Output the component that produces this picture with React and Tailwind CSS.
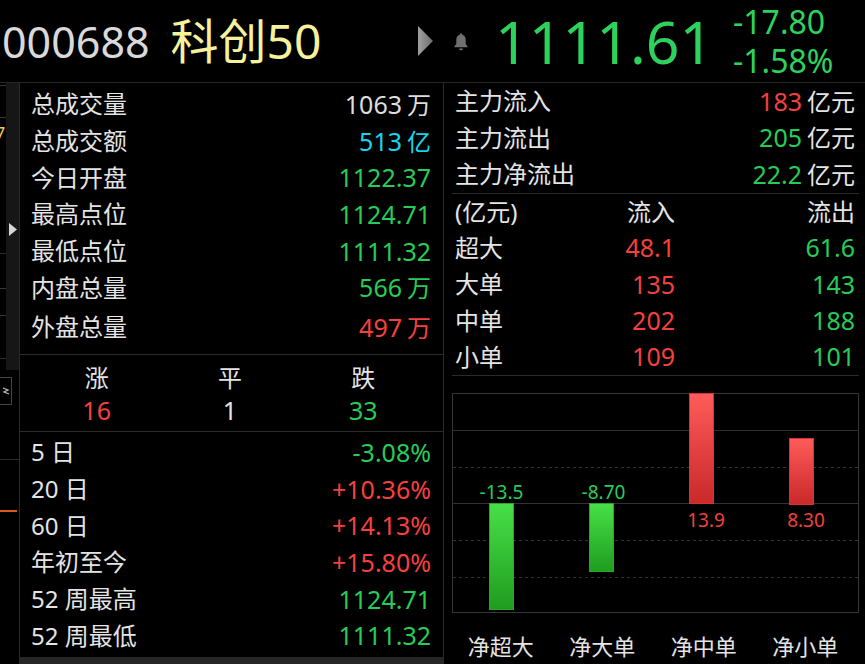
import React from 'react';

// colours taken from the quote panel
const RED = 'text-[#f5403f]';
const GREEN = 'text-[#27cc57]';

const summaryRows = [
  { label: '总成交量', value: '1063', unit: '万', color: 'text-[#dedede]' },
  { label: '总成交额', value: '513', unit: '亿', color: 'text-[#1cd3ec]' },
  { label: '今日开盘', value: '1122.37', color: GREEN },
  { label: '最高点位', value: '1124.71', color: GREEN },
  { label: '最低点位', value: '1111.32', color: GREEN },
  { label: '内盘总量', value: '566', unit: '万', color: GREEN },
];

const periodRows = [
  { label: '5 日', value: '-3.08%', color: GREEN },
  { label: '20 日', value: '+10.36%', color: RED },
  { label: '60 日', value: '+14.13%', color: RED },
  { label: '年初至今', value: '+15.80%', color: RED },
  { label: '52 周最高', value: '1124.71', color: GREEN },
  { label: '52 周最低', value: '1111.32', color: GREEN },
];

const flowRows = [
  { label: '主力流入', value: '183', color: RED },
  { label: '主力流出', value: '205', color: GREEN },
  { label: '主力净流出', value: '22.2', color: GREEN },
];

const orderRows = [
  { label: '超大', inflow: '48.1', outflow: '61.6' },
  { label: '大单', inflow: '135', outflow: '143' },
  { label: '中单', inflow: '202', outflow: '188' },
  { label: '小单', inflow: '109', outflow: '101' },
];

function SideStrip() {
  return (
    <div className="flex w-[20px] flex-col border-r border-[#2a2a2a]">
      <div className="flex h-[287px]">
        <div className="flex w-[6px] flex-col">
          <div className="h-[2px]" />
          <div className="h-[33px] border-y border-[#383838]" />
          <div className="flex h-[30px] items-center overflow-hidden">
            <span className="-ml-[5px] text-[18px] leading-none text-[#e9c94c]">7</span>
          </div>
          <div className="h-[105px]" />
          <div className="h-[35px] border-t border-[#2e2e2e]" />
          <div className="h-[28px] border-y border-[#383838]" />
          <div className="h-[42px]" />
          <div className="border-t border-[#2e2e2e]" />
        </div>
        <div className="flex w-[13px] flex-col items-center bg-[#161616]">
          <svg width="10" height="13" viewBox="0 0 10 13" className="mt-[140px]">
            <polygon points="1,0 9,6.5 1,13" fill="#d6d6d6" />
          </svg>
        </div>
      </div>
      <div className="h-[7px]" />
      <div className="flex h-[28px] w-[12px] items-center justify-center border-y border-r border-[#444]">
        <svg width="8" height="10" viewBox="0 0 8 10">
          <polyline points="1,2 6,4 2,6 7,8" fill="none" stroke="#bdbdbd" strokeWidth="1.3" />
        </svg>
      </div>
      <div className="h-[54px]" />
      <div className="h-[51px] border-t border-[#2a2a2a]" />
      <div className="h-[2px] w-[17px] bg-[#d8561f]" />
    </div>
  );
}

function Unit({ children }) {
  return <span className="ml-[5px] text-[24px]">{children}</span>;
}

function LeftPanel() {
  return (
    <div className="flex w-[424px] flex-col border-r border-[#2a2a2a]">
      {/* summary */}
      <div className="flex h-[272px] flex-col border-b border-[#2a2a2a] pt-[3px] pl-[11px] pr-[12px]">
        {summaryRows.map((r) => (
          <div key={r.label} className="flex h-[36.7px] items-center justify-between">
            <span className="text-[#e4e4e4]">{r.label}</span>
            <span className={`text-[25px] ${r.color}`}>
              {r.value}
              {r.unit && <Unit>{r.unit}</Unit>}
            </span>
          </div>
        ))}
        <div className="flex h-[42px] items-center justify-between">
          <span className="text-[#e4e4e4]">外盘总量</span>
          <span className={`text-[25px] ${RED}`}>
            497<Unit>万</Unit>
          </span>
        </div>
      </div>

      {/* advance / flat / decline */}
      <div className="h-[77px] border-b border-[#2a2a2a]">
        <div className="ml-[10px] mt-[9px] grid h-[28px] w-[400px] grid-cols-3 items-center text-center text-[#e4e4e4]">
          <span>涨</span>
          <span>平</span>
          <span>跌</span>
        </div>
        <div className="ml-[10px] grid h-[36px] w-[400px] grid-cols-3 items-center text-center text-[25px]">
          <span className={RED}>16</span>
          <span className="text-[#e4e4e4]">1</span>
          <span className={GREEN}>33</span>
        </div>
      </div>

      {/* period changes */}
      <div className="flex flex-1 flex-col pt-[2px] pl-[11px] pr-[12px]">
        {periodRows.map((r) => (
          <div key={r.label} className="flex h-[36.7px] items-center justify-between">
            <span className="text-[#e4e4e4]">{r.label}</span>
            <span className={`text-[25px] ${r.color}`}>{r.value}</span>
          </div>
        ))}
      </div>
      <div className="h-[7px] bg-[#262626]" />
    </div>
  );
}

function FlowChart() {
  const bars = [
    { x: 37, y: 110, h: 106, up: false, label: '-13.5', lx: 49.5, ly: 106 },
    { x: 137, y: 110, h: 68, up: false, label: '-8.70', lx: 151.5, ly: 106 },
    { x: 237, y: 0, h: 110, up: true, label: '13.9', lx: 254, ly: 134 },
    { x: 337, y: 45, h: 66, up: true, label: '8.30', lx: 354, ly: 134 },
  ];
  return (
    <svg width="408" height="221" viewBox="0 0 408 221" className="ml-[8px] mt-[17px] block">
      <defs>
        <linearGradient id="gUp" x1="0" y1="0" x2="0" y2="1">
          <stop offset="0" stopColor="#ff5b5b" />
          <stop offset="1" stopColor="#c92929" />
        </linearGradient>
        <linearGradient id="gDown" x1="0" y1="0" x2="0" y2="1">
          <stop offset="0" stopColor="#48e048" />
          <stop offset="1" stopColor="#1f9c1f" />
        </linearGradient>
      </defs>
      <rect x="0.5" y="0.5" width="406" height="219" fill="none" stroke="#363636" />
      <line x1="1" x2="406" y1="37.5" y2="37.5" stroke="#2e2e2e" />
      <line x1="1" x2="406" y1="74.5" y2="74.5" stroke="#333" strokeDasharray="3 3" />
      <line x1="1" x2="406" y1="110.5" y2="110.5" stroke="#333" />
      <line x1="1" x2="406" y1="147.5" y2="147.5" stroke="#333" strokeDasharray="3 3" />
      <line x1="1" x2="406" y1="184.5" y2="184.5" stroke="#333" strokeDasharray="3 3" />
      {bars.map((b) => (
        <g key={b.label}>
          <rect
            x={b.x + 0.5}
            y={b.y + 0.5}
            width="24"
            height={b.h}
            fill={b.up ? 'url(#gUp)' : 'url(#gDown)'}
            stroke={b.up ? '#d83232' : '#28a828'}
          />
          <text
            x={b.lx}
            y={b.ly}
            textAnchor="middle"
            fontSize="19"
            fontFamily="'Noto Sans', sans-serif"
            fill={b.up ? '#f0403f' : '#27cc57'}
          >
            {b.label}
          </text>
        </g>
      ))}
    </svg>
  );
}

function RightPanel() {
  return (
    <div className="flex flex-1 flex-col">
      <div className="ml-[8px] mr-[6px] border-b border-[#2a2a2a]">
        {flowRows.map((r) => (
          <div key={r.label} className="flex h-[36.5px] items-center justify-between pl-[3px] pr-[4px]">
            <span className="text-[#e4e4e4]">{r.label}</span>
            <span className="text-[#e4e4e4]">
              <span className={`text-[25px] ${r.color}`}>{r.value}</span>
              <Unit>亿元</Unit>
            </span>
          </div>
        ))}
      </div>
      <div className="ml-[8px] mr-[6px] border-b border-[#2a2a2a]">
        <div className="flex h-[36.3px] items-center pl-[3px] pr-[4px] text-[#e4e4e4]">
          <span className="w-[117px]">(亿元)</span>
          <span className="w-[103px] text-right">流入</span>
          <span className="flex-1 text-right">流出</span>
        </div>
        {orderRows.map((r) => (
          <div key={r.label} className="flex h-[36.3px] items-center pl-[3px] pr-[4px]">
            <span className="w-[117px] text-[#e4e4e4]">{r.label}</span>
            <span className={`w-[103px] text-right text-[25px] ${RED}`}>{r.inflow}</span>
            <span className={`flex-1 text-right text-[25px] ${GREEN}`}>{r.outflow}</span>
          </div>
        ))}
      </div>
      <FlowChart />
      <div className="ml-[6px] mt-[20px] flex h-[25px] items-center text-[22px] text-[#e4e4e4]">
        {['净超大', '净大单', '净中单', '净小单'].map((t) => (
          <span key={t} className="w-[101.5px] text-center">
            {t}
          </span>
        ))}
      </div>
    </div>
  );
}

export default function App() {
  return (
    <div className="h-[664px] w-[865px] overflow-hidden bg-black font-['Noto_Sans','Noto_Sans_CJK_SC',sans-serif] text-[24px] leading-none">
      {/* header */}
      <div className="flex h-[83px] items-center border-b border-[#262626]">
        <div className="flex w-[416px] items-center">
          <span className="ml-[2px] text-[43px] text-[#d9d9d9]">000688</span>
          <span className="ml-[21px] text-[48px] text-[#f6f29c]">科创50</span>
        </div>
        <svg width="16" height="30" viewBox="0 0 16 30" className="ml-[2px]">
          <defs>
            <linearGradient id="tri" x1="0" y1="0" x2="1" y2="0">
              <stop offset="0" stopColor="#a0a0a0" />
              <stop offset="1" stopColor="#6c6c6c" />
            </linearGradient>
          </defs>
          <polygon points="0,0 15,15 0,30" fill="url(#tri)" />
        </svg>
        <svg width="16" height="19" viewBox="0 0 16 19" className="ml-[19px]">
          <path
            d="M8 1.5c.8 0 1.3.5 1.3 1.2 2.3.6 3.4 2.5 3.4 5v4.3l1.8 2.3v.9H1.5v-.9l1.8-2.3V7.7c0-2.5 1.1-4.4 3.4-5 0-.7.5-1.2 1.3-1.2z M6 16.5h4c0 1.1-.9 1.8-2 1.8s-2-.7-2-1.8z"
            fill="#707070"
          />
        </svg>
        <div className="ml-[26px] w-[236px]">
          <span className="text-[59px] text-[#2dd25c]">1111.61</span>
        </div>
        <div className="flex flex-col pl-[2px] text-[32px] leading-[39px] text-[#2dd25c]">
          <span>-17.80</span>
          <span>-1.58%</span>
        </div>
      </div>

      {/* body */}
      <div className="flex h-[581px]">
        <SideStrip />
        <LeftPanel />
        <RightPanel />
      </div>
    </div>
  );
}
